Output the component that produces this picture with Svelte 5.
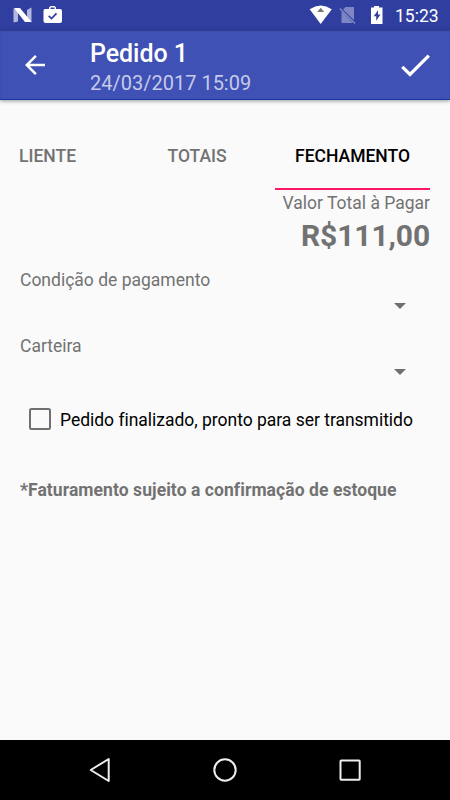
<script>
  let finished = $state(false);
  let activeTab = $state('FECHAMENTO');
  const fields = ['Condição de pagamento', 'Carteira'];
</script>

<div class="screen">
  <div class="status">
    <svg class="notifications" width="70" height="30" viewBox="0 0 70 30">
      <path d="M13.5 8.5 18 11V21.5L13.5 22.5ZM27 10 31.5 7.5V22.5L27 20Z" fill="#b3b8df" />
      <path d="M14 8h6l11.5 14h-6.5Z" fill="#fff" />
      <path d="M45 9h4V7.5L50.5 6h4L56 7.500V9h4q2 0 2 2v10q0 2-2 2H45.500q-2 0-2-2V11q0-2 1.500-2ZM50.500 9h4V7.500h-4Z" fill="#fff" fill-rule="evenodd" />
      <path d="m48.700 15.800 2.800 2.800 5-5.200" fill="none" stroke="#303f9f" stroke-width="1.700" />
    </svg>
    <svg class="system" width="85" height="30" viewBox="305 0 85 30">
      <path d="M309.700 9.200Q320.700 1.800 331.800 9.200L320.700 24Z" fill="#fff" />
      <path d="m320.700 7.800 3.500 4.200h-7Z" fill="#777" />
      <path d="M345.500 7H354v13L343 9.500ZM341.500 11 353 23h-11.500Z" fill="#7e86c4" />
      <path d="m339.800 8.500 15.300 15" stroke="#7e86c4" stroke-width="1.500" />
      <path d="M374 6h5v1.500h3.500V24H371V7.500h3Z" fill="#fff" />
      <path d="m378 10.300-4.300 6h2.500v4.500l4.300-6.200H378Z" fill="#303f9f" />
    </svg>
    <span class="clock">15:23</span>
  </div>

  <header>
    <button class="back" aria-label="Voltar">
      <svg width="30" height="30" viewBox="0 0 24 24"><path d="M20 11H7.830l5.590-5.590L12 4l-8 8 8 8 1.410-1.410L7.830 13H20v-2z" fill="#fff" /></svg>
    </button>
    <div class="heading">
      <h1>Pedido 1</h1>
      <p>24/03/2017 15:09</p>
    </div>
    <button class="confirm" aria-label="Confirmar">
      <svg width="40" height="40" viewBox="0 0 40 40"><path d="m7.300 21.800 7.700 7.700L33.800 10.600" fill="none" stroke="#fff" stroke-width="3.300" /></svg>
    </button>
  </header>

  <main>
    <nav class="tabs">
      <button class="client" class:active={activeTab === 'LIENTE'} onclick={() => (activeTab = 'LIENTE')}>LIENTE</button>
      <button class="totals" class:active={activeTab === 'TOTAIS'} onclick={() => (activeTab = 'TOTAIS')}>TOTAIS</button>
      <button class="closing" class:active={activeTab === 'FECHAMENTO'} onclick={() => (activeTab = 'FECHAMENTO')}>FECHAMENTO</button>
    </nav>
    <div class="total">
      <span>Valor Total à Pagar</span>
      <strong>R$111,00</strong>
    </div>
    {#each fields as field}
      <div class="field">
        <span>{field}</span>
        <div class="spinner"><svg width="12" height="6" viewBox="0 0 12 6"><path d="M0 0h12L6 6Z" fill="#707070" /></svg></div>
      </div>
    {/each}
    <label>
      <input type="checkbox" bind:checked={finished} />
      <span>Pedido finalizado, pronto para ser transmitido</span>
    </label>
    <p class="note">*Faturamento sujeito a confirmação de estoque</p>
  </main>

  <footer>
    <svg width="30" height="30" viewBox="0 0 30 30"><path d="M23.700 4.500v22L5.700 15.500Z" transform="translate(0 -.5)" /></svg>
    <svg width="30" height="30" viewBox="0 0 30 30"><circle cx="15" cy="15" r="10.700" /></svg>
    <svg width="30" height="30" viewBox="0 0 30 30"><rect x="5.500" y="5.500" width="19.200" height="19.200" rx=".7" /></svg>
  </footer>
</div>

<style>
  :global(body) { margin: 0; }
  .screen {
    width: 450px;
    height: 800px;
    display: flex;
    flex-direction: column;
    overflow: hidden;
    background: #fafafa;
    color: #727272;
    font: 17.5px/20px Roboto, sans-serif;
  }
  svg { display: block; }
  h1, p { margin: 0; }
  button { border: 0; padding: 0; background: none; font: inherit; color: inherit; }
  .status {
    height: 30px;
    display: flex;
    align-items: center;
    background: #303f9f;
    color: #fff;
  }
  .system { margin-left: 235px; }
  .clock { margin-left: 5px; line-height: 30px; padding-top: 1px; }
  header {
    height: 70px;
    box-sizing: border-box;
    display: flex;
    flex: none;
    align-items: center;
    padding: 0 15px 0 20px;
    background: #3f51b5;
    border-bottom: 1px solid #1737a5;
    box-shadow: 0 1px 4px rgba(0, 0, 0, .4), inset 0 1px 1px #303c91;
    color: #fff;
  }
  .heading { margin-left: 40px; flex: 1; padding-top: 8px; }
  h1 { font-size: 25px; line-height: 30px; font-weight: 500; letter-spacing: -.05px; }
  .heading p { font-size: 20px; line-height: 29px; color: #c5cae9; }
  main { flex: 1; padding: 30px 20px 0; }
  .tabs { height: 60px; display: flex; font-weight: 500; }
  .tabs button { line-height: 52px; padding-bottom: 6px; border-bottom: 2px solid transparent; white-space: nowrap; }
  .tabs .client { width: 101px; margin-left: -1px; text-align: left; }
  .tabs .totals { width: 155px; padding-right: 1px; }
  .tabs .closing { width: 155px; }
  .tabs .active { color: #000; border-color: #ff1668; }
  .total { display: flex; flex-direction: column; align-items: flex-end; margin-top: 3px; }
  .total strong { font-size: 30px; line-height: 36px; margin-top: 5px; letter-spacing: -.1px; }
  .field { height: 66px; }
  .field:nth-of-type(2) { margin-top: 16px; }
  .field span { display: block; }
  .spinner { display: flex; justify-content: flex-end; padding: 13px 24px 0 0; }
  label { display: flex; align-items: center; margin-top: 5px; height: 24px; color: #000; }
  label span { padding-top: 2px; letter-spacing: -.02px; }
  input {
    appearance: none;
    width: 22px;
    height: 22px;
    box-sizing: border-box;
    margin: 0 9px 0 9px;
    border: 2px solid #707070;
    border-radius: 2.500px;
  }
  .note { font-weight: 700; margin-top: 49px; letter-spacing: .07px; }
  footer {
    height: 60px;
    display: flex;
    align-items: center;
    gap: 95px;
    padding-left: 85px;
    background: #000;
  }
  footer svg { fill: none; stroke: #eee; stroke-width: 2; stroke-linejoin: round; }
</style>
